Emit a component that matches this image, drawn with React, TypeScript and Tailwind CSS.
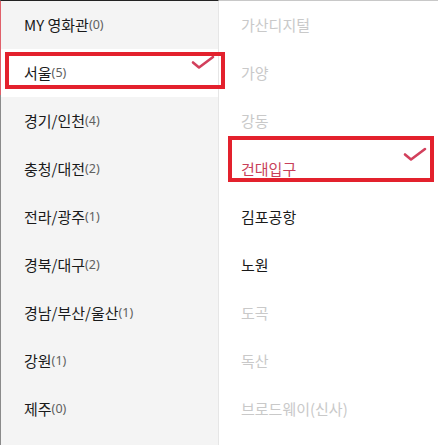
const font = { fontFamily: '"Noto Sans CJK KR", "Noto Sans", sans-serif' };

type Region = { name: string; count: number; selected?: boolean };
type Theater = { name: string; state: "off" | "on" | "picked" };

const regions: Region[] = [
  { name: "MY 영화관", count: 0 },
  { name: "서울", count: 5, selected: true },
  { name: "경기/인천", count: 4 },
  { name: "충청/대전", count: 2 },
  { name: "전라/광주", count: 1 },
  { name: "경북/대구", count: 2 },
  { name: "경남/부산/울산", count: 1 },
  { name: "강원", count: 1 },
  { name: "제주", count: 0 },
];

const theaters: Theater[] = [
  { name: "가산디지털", state: "off" },
  { name: "가양", state: "off" },
  { name: "강동", state: "off" },
  { name: "건대입구", state: "picked" },
  { name: "김포공항", state: "on" },
  { name: "노원", state: "on" },
  { name: "도곡", state: "off" },
  { name: "독산", state: "off" },
  { name: "브로드웨이(신사)", state: "off" },
];

function Check({ className }: { className: string }) {
  return (
    <svg className={className} width="24" height="16" viewBox="0 0 24 16" fill="none">
      <path d="M2 8.5 L8 13.5 L22 3" stroke="#d2405c" strokeWidth="2.6" strokeLinecap="round" strokeLinejoin="round" />
    </svg>
  );
}

export default function App() {
  return (
    <div className="flex h-[445px] w-[438px] overflow-hidden bg-white" style={font}>
      {/* region list */}
      <div className="relative w-[219px] shrink-0 border-t border-l border-r border-t-[#222] border-l-[#8a8a8a] border-r-[#e6e6e6] bg-[#f4f4f4]">
        <div className="absolute -left-px top-0 h-[94px] w-px bg-[#e0606a]" />
        {regions.map((r) => (
          <div
            key={r.name}
            className={`relative flex h-[48px] items-center pl-[23px] ${r.selected ? "bg-white" : ""}`}
          >
            <span className="text-[15px] text-[#1a1a1a]">{r.name}</span>
            <span className="text-[12.5px] text-[#606060]" style={{ fontFamily: '"Noto Sans", sans-serif' }}>
              ({r.count})
            </span>
            {r.selected ? (
              <>
                <div className="absolute left-[4px] top-[3px] h-[37px] w-[220px] border-[4px] border-[#e3212d]" />
                <Check className="absolute left-[190px] top-[5px]" />
              </>
            ) : null}
          </div>
        ))}
      </div>

      {/* theater list */}
      <div className="flex-1 border-t border-t-[#c8c8c8] bg-white">
        {theaters.map((t) => (
          <div key={t.name} className="relative flex h-[48px] items-center pl-[22px]">
            <span
              className={`text-[15px] ${
                t.state === "off" ? "text-[#c9c9c9]" : t.state === "picked" ? "text-[#c83f5a]" : "text-[#1a1a1a]"
              }`}
            >
              {t.name}
            </span>
            {t.state === "picked" ? (
              <>
                <div className="absolute left-[9px] top-[-9px] h-[46px] w-[206px] border-[4px] border-[#e3212d]" />
                <Check className="absolute left-[184px] top-[1px]" />
              </>
            ) : null}
          </div>
        ))}
      </div>
    </div>
  );
}
